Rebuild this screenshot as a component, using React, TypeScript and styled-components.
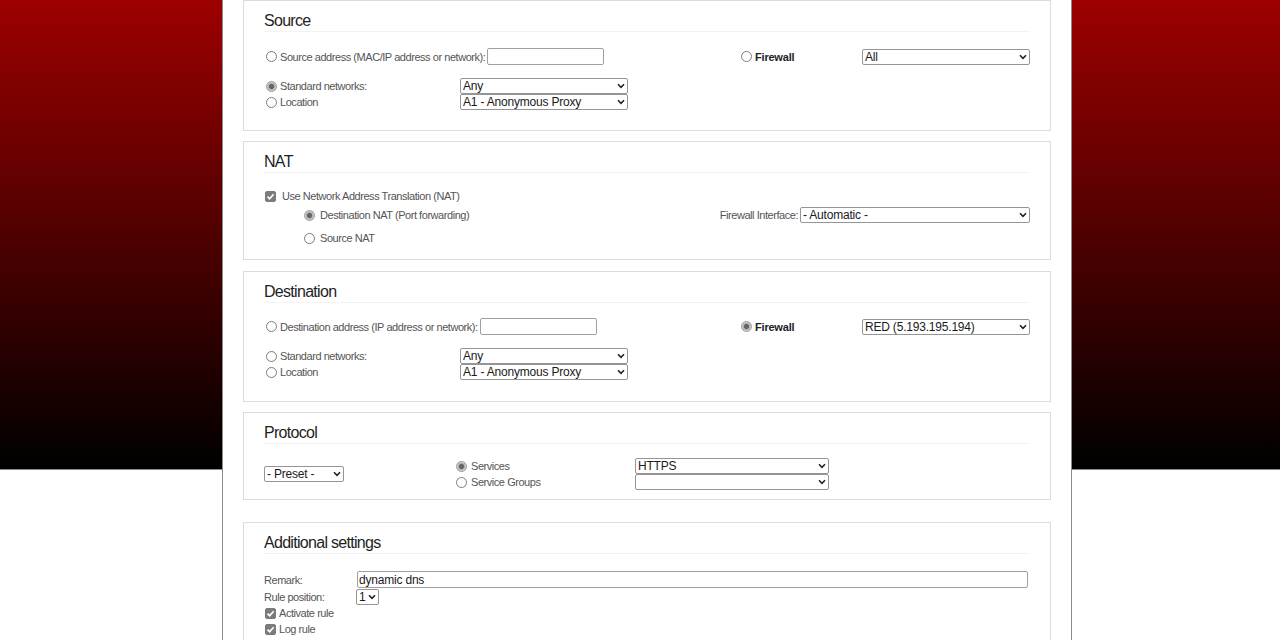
import * as React from 'react';
import styled, { createGlobalStyle } from 'styled-components';

const GlobalStyle = createGlobalStyle`
  html, body {
    margin: 0;
    padding: 0;
  }
  body {
    font-family: "Liberation Sans", Arial, sans-serif;
    background-color: #fff;
    background-image: linear-gradient(to bottom, #9e0000 0px, #000 469px, #8a8a8a 469px, #8a8a8a 470px, #fff 470px);
    background-repeat: no-repeat;
    background-size: 100% 100%;
  }
`;

const Page = styled.div`
  width: 850px;
  margin-left: 222px;
  padding: 0 20px 40px;
  box-sizing: border-box;
  background: #fff;
  border-left: 1px solid #8c8c8c;
  border-right: 1px solid #8c8c8c;
`;

const Panel = styled.section<{ $mt: number }>`
  margin-top: ${p => p.$mt}px;
  border: 1px solid #dcdcdc;
  background: #fff;
  padding: 0 20px;
`;

const Title = styled.h2`
  margin: 0;
  padding-top: 10px;
  font-size: 16px;
  line-height: 20px;
  font-weight: normal;
  letter-spacing: -0.7px;
  color: #1e1e1e;
  border-bottom: 1px solid #f3f3f3;
`;

const Body = styled.div<{ $pt: number; $pb: number }>`
  padding: ${p => p.$pt}px 0 ${p => p.$pb}px;
`;

const Row = styled.div<{ $h: number; $mt?: number }>`
  display: flex;
  align-items: center;
  height: ${p => p.$h}px;
  margin-top: ${p => p.$mt ?? 0}px;
`;

const Cell = styled.div<{ $w?: number; $indent?: number }>`
  display: flex;
  align-items: center;
  flex: ${p => (p.$w ? 'none' : '1')};
  width: ${p => (p.$w ? `${p.$w}px` : 'auto')};
  padding-left: ${p => p.$indent ?? 0}px;
  box-sizing: border-box;
`;

const Stack = styled.div<{ $w?: number }>`
  display: flex;
  flex-direction: column;
  flex: none;
  width: ${p => (p.$w ? `${p.$w}px` : 'auto')};
`;

const Line = styled.div`
  display: flex;
  align-items: center;
  height: 16px;
`;

const Spacer = styled.div`
  flex: 1;
`;

const Label = styled.span<{ $bold?: boolean; $gap?: number }>`
  font-size: 11px;
  letter-spacing: ${p => (p.$bold ? '-0.2px' : '-0.45px')};
  font-weight: ${p => (p.$bold ? 'bold' : 'normal')};
  color: ${p => (p.$bold ? '#222' : '#555')};
  margin-left: ${p => p.$gap ?? 0}px;
  margin-right: 2px;
  white-space: nowrap;
`;

const Radio = styled.input.attrs({ type: 'radio' })`
  appearance: none;
  flex: none;
  width: 11px;
  height: 11px;
  margin: 0 3px 0 2px;
  border: 1px solid #7c7c7c;
  border-radius: 50%;
  background: #fff;
  box-sizing: border-box;

  &:checked {
    border-color: #9a9a9a;
    background: radial-gradient(circle, #666 0 2.2px, #a9a9a9 2.8px, #d4d4d4 4.5px);
  }
`;

const Box = styled.span<{ $checked: boolean }>`
  display: inline-flex;
  align-items: center;
  justify-content: center;
  flex: none;
  width: 11px;
  height: 11px;
  margin-left: 1px;
  border-radius: 2px;
  box-sizing: border-box;
  background: ${p => (p.$checked ? '#7b7b7b' : '#fff')};
  border: 1px solid ${p => (p.$checked ? '#7b7b7b' : '#8a8a8a')};
`;

const CheckBox = ({ checked = true }: { checked?: boolean }) => (
  <Box $checked={checked} role="checkbox" aria-checked={checked}>
    {checked ? (
      <svg width="9" height="9" viewBox="0 0 9 9">
        <polyline points="1.5,4.6 3.6,6.7 7.6,2.2" fill="none" stroke="#fff" strokeWidth="1.7" />
      </svg>
    ) : null}
  </Box>
);

const TextInput = styled.input<{ $w?: number; $mr?: number }>`
  flex: ${p => (p.$w ? 'none' : '1')};
  width: ${p => (p.$w ? `${p.$w}px` : 'auto')};
  min-width: 0;
  height: 17px;
  margin: 0 ${p => p.$mr ?? 0}px 0 0;
  padding: 0 1px;
  border: 1px solid #a0a0a0;
  border-radius: 2px;
  box-sizing: border-box;
  font: 12px "Liberation Sans", Arial, sans-serif;
  letter-spacing: -0.2px;
  color: #1a1a1a;
  background: #fff;
  outline: none;
`;

const SelectWrap = styled.span<{ $w: number }>`
  position: relative;
  display: inline-flex;
  flex: none;
  width: ${p => p.$w}px;
  height: 16px;
`;

const NativeSelect = styled.select`
  appearance: none;
  width: 100%;
  height: 100%;
  margin: 0;
  padding: 0 12px 0 2px;
  border: 1px solid #959595;
  border-radius: 2px;
  background: #fff;
  box-sizing: border-box;
  font: 12px/14px "Liberation Sans", Arial, sans-serif;
  letter-spacing: -0.2px;
  color: #1a1a1a;
  outline: none;
`;

const Chevron = styled.svg`
  position: absolute;
  right: 3px;
  top: 5px;
  pointer-events: none;
`;

const Select = ({ w, value }: { w: number; value: string }) => (
  <SelectWrap $w={w}>
    <NativeSelect defaultValue={value}>
      <option value={value}>{value}</option>
    </NativeSelect>
    <Chevron width="8" height="6" viewBox="0 0 8 6">
      <polyline points="1,1.3 4,4.3 7,1.3" fill="none" stroke="#222" strokeWidth="1.6" />
    </Chevron>
  </SelectWrap>
);

const App = () => {
  return (
    <>
      <GlobalStyle />
      <Page>
        <Panel $mt={0}>
          <Title>Source</Title>
          <Body $pt={16} $pb={20}>
            <Row $h={17}>
              <Cell $w={475}>
                <Radio name="src" />
                <Label>Source address (MAC/IP address or network):</Label>
                <TextInput $w={117} />
              </Cell>
              <Cell $w={123}>
                <Radio name="src" />
                <Label $bold>Firewall</Label>
              </Cell>
              <Select w={168} value="All" />
            </Row>
            <Row $h={16} $mt={13}>
              <Cell $w={196}>
                <Radio name="src" defaultChecked />
                <Label>Standard networks:</Label>
              </Cell>
              <Select w={168} value="Any" />
            </Row>
            <Row $h={16}>
              <Cell $w={196}>
                <Radio name="src" />
                <Label>Location</Label>
              </Cell>
              <Select w={168} value="A1 - Anonymous Proxy" />
            </Row>
          </Body>
        </Panel>

        <Panel $mt={10}>
          <Title>NAT</Title>
          <Body $pt={15} $pb={13}>
            <Row $h={16}>
              <CheckBox />
              <Label $gap={6}>Use Network Address Translation (NAT)</Label>
            </Row>
            <Row $h={16} $mt={3}>
              <Cell $indent={38}>
                <Radio name="nat" defaultChecked />
                <Label $gap={2}>Destination NAT (Port forwarding)</Label>
              </Cell>
              <Spacer />
              <Label>Firewall Interface:</Label>
              <Select w={230} value="- Automatic -" />
            </Row>
            <Row $h={16} $mt={7}>
              <Cell $indent={38}>
                <Radio name="nat" />
                <Label $gap={2}>Source NAT</Label>
              </Cell>
            </Row>
          </Body>
        </Panel>

        <Panel $mt={11}>
          <Title>Destination</Title>
          <Body $pt={15} $pb={21}>
            <Row $h={17}>
              <Cell $w={475}>
                <Radio name="dst" />
                <Label>Destination address (IP address or network):</Label>
                <TextInput $w={117} />
              </Cell>
              <Cell $w={123}>
                <Radio name="dst" defaultChecked />
                <Label $bold>Firewall</Label>
              </Cell>
              <Select w={168} value="RED (5.193.195.194)" />
            </Row>
            <Row $h={16} $mt={13}>
              <Cell $w={196}>
                <Radio name="dst" />
                <Label>Standard networks:</Label>
              </Cell>
              <Select w={168} value="Any" />
            </Row>
            <Row $h={16}>
              <Cell $w={196}>
                <Radio name="dst" />
                <Label>Location</Label>
              </Cell>
              <Select w={168} value="A1 - Anonymous Proxy" />
            </Row>
          </Body>
        </Panel>

        <Panel $mt={10}>
          <Title>Protocol</Title>
          <Body $pt={14} $pb={9}>
            <Row $h={32}>
              <Cell $w={190}>
                <Select w={80} value="- Preset -" />
              </Cell>
              <Stack $w={181}>
                <Line>
                  <Radio name="proto" defaultChecked />
                  <Label $gap={1}>Services</Label>
                </Line>
                <Line>
                  <Radio name="proto" />
                  <Label $gap={1}>Service Groups</Label>
                </Line>
              </Stack>
              <Stack>
                <Select w={194} value="HTTPS" />
                <Select w={194} value="" />
              </Stack>
            </Row>
          </Body>
        </Panel>

        <Panel $mt={22}>
          <Title>Additional settings</Title>
          <Body $pt={17} $pb={20}>
            <Row $h={17}>
              <Cell $w={93}>
                <Label>Remark:</Label>
              </Cell>
              <TextInput defaultValue="dynamic dns" $mr={2} />
            </Row>
            <Row $h={16} $mt={1}>
              <Cell $w={92}>
                <Label>Rule position:</Label>
              </Cell>
              <Select w={23} value="1" />
            </Row>
            <Row $h={16}>
              <CheckBox />
              <Label $gap={3}>Activate rule</Label>
            </Row>
            <Row $h={16}>
              <CheckBox />
              <Label $gap={3}>Log rule</Label>
            </Row>
            <Row $h={16}>
              <CheckBox checked={false} />
            </Row>
          </Body>
        </Panel>
      </Page>
    </>
  );
};

export default App;
